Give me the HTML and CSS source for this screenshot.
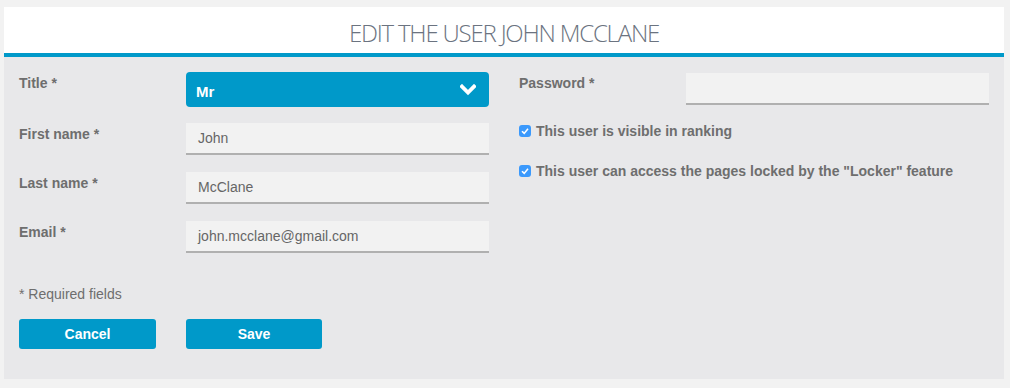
FILE: index.html
```html
<!DOCTYPE html>
<html lang="en">
<head>
    <meta charset="UTF-8">
    <title>Edit the user John McClane</title>
    <link rel="stylesheet" href="styles.css">
</head>
<body>

    <div class="card">
        <!-- Header with the page title -->
        <div class="card-header">
            <h1>EDIT THE USER JOHN MCCLANE</h1>
        </div>

        <form class="card-body">
            <!-- Left column: identity fields -->
            <div class="column">
                <div class="row row-select">
                    <label>Title *</label>
                    <div class="select">
                        <span>Mr</span>
                        <svg class="chevron" width="16" height="12" viewBox="0 0 16 12">
                            <polyline points="2,2.5 8,8.5 14,2.5" fill="none" stroke="#fff" stroke-width="3.8" stroke-linecap="square"/>
                        </svg>
                    </div>
                </div>
                <div class="row">
                    <label>First name *</label>
                    <div class="input">John</div>
                </div>
                <div class="row">
                    <label>Last name *</label>
                    <div class="input">McClane</div>
                </div>
                <div class="row">
                    <label>Email *</label>
                    <div class="input">john.mcclane@gmail.com</div>
                </div>

                <p class="required">* Required fields</p>

                <div class="buttons">
                    <button type="button" class="btn">Cancel</button>
                    <button type="button" class="btn">Save</button>
                </div>
            </div>

            <!-- Right column: password and access options -->
            <div class="column">
                <div class="row row-password">
                    <label>Password *</label>
                    <div class="input"></div>
                </div>
                <div class="check">
                    <span class="box">
                        <svg width="12" height="12" viewBox="0 0 12 12"><polyline points="3,6.2 5.2,8.4 9,3.8" fill="none" stroke="#fff" stroke-width="1.6"/></svg>
                    </span>
                    This user is visible in ranking
                </div>
                <div class="check">
                    <span class="box">
                        <svg width="12" height="12" viewBox="0 0 12 12"><polyline points="3,6.2 5.2,8.4 9,3.8" fill="none" stroke="#fff" stroke-width="1.6"/></svg>
                    </span>
                    This user can access the pages locked by the "Locker" feature
                </div>
            </div>
        </form>
    </div>

</body>
</html>
```

FILE: styles.css
```css
body {
    margin: 0;
    padding: 7px 6px 9px 4px;
    background: #f2f2f2;
    font-family: "Liberation Sans", Arial, sans-serif;
    color: #6e6e6e;
}

.card {
    width: 1000px;
}

.card-header {
    background: #fff;
    height: 46px;
    border-bottom: 4px solid #0099c9;
    display: flex;
    justify-content: center;
    align-items: center;
}

h1 {
    margin: 5px 0 0;
    font-family: "Open Sans", sans-serif;
    font-weight: 300;
    font-size: 24px;
    color: #6b7380;
    letter-spacing: -1.2px;
}

/* Two equal columns */
.card-body {
    background: #e8e8ea;
    display: grid;
    grid-template-columns: 1fr 1fr;
    column-gap: 30px;
    padding: 15px 15px 30px;
}

.row {
    display: grid;
    grid-template-columns: 167px 1fr;
    margin-bottom: 17px;
}

.row label {
    font-size: 14px;
    font-weight: bold;
    padding-top: 3px;
}

.row-select {
    margin-bottom: 16px;
}

.select {
    height: 35px;
    background: #0099c9;
    border-radius: 4px;
    display: flex;
    align-items: center;
    justify-content: space-between;
    padding: 3px 13px 0 10px;
    box-sizing: border-box;
    color: #fff;
    font-size: 15px;
    font-weight: bold;
}

.chevron {
    margin-top: -3px;
}

.input {
    height: 30px;
    background: #f2f2f2;
    border-bottom: 2px solid #b0b0b0;
    display: flex;
    align-items: center;
    padding-left: 12px;
    font-size: 14px;
    color: #666;
}

.row-password {
    margin-top: 1px;
    margin-bottom: 18px;
}

.row-password label {
    padding-top: 2px;
}

.required {
    margin: 33px 0 0;
    font-size: 14px;
    line-height: 16px;
}

.buttons {
    display: flex;
    gap: 30px;
    margin-top: 17px;
}

.btn {
    width: 137px;
    height: 30px;
    border: none;
    border-radius: 3px;
    background: #0099c9;
    color: #fff;
    font-family: "Liberation Sans", Arial, sans-serif;
    font-size: 14px;
    font-weight: bold;
}

.buttons .btn + .btn {
    width: 136px;
}

/* Checked checkboxes */
.check {
    display: flex;
    align-items: center;
    gap: 5px;
    font-size: 14px;
    font-weight: bold;
    line-height: 16px;
    margin-bottom: 24px;
}

.box {
    width: 12px;
    height: 12px;
    border-radius: 3px;
    background: #3b99fc;
    display: flex;
}
```
